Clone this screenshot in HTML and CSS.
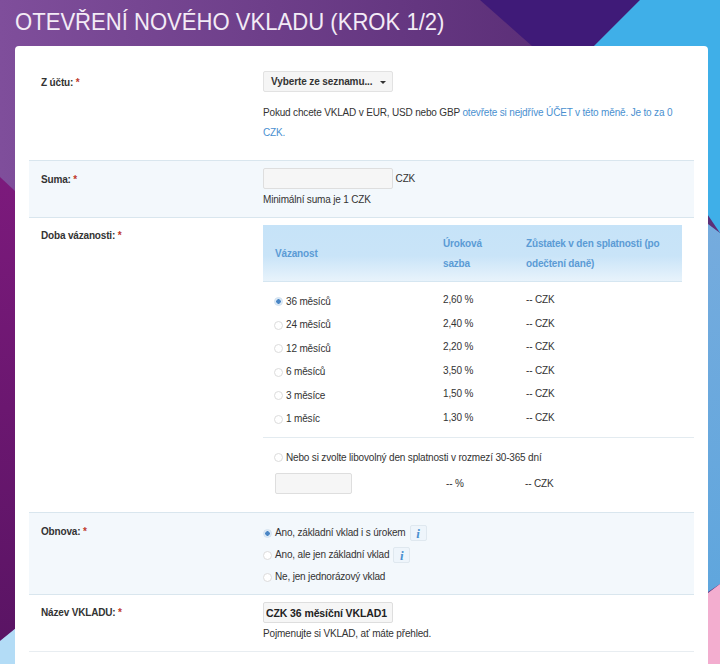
FILE: index.html
```html
<!DOCTYPE html>
<html lang="cs">
<head>
<meta charset="UTF-8">
<meta name="viewport" content="width=device-width, initial-scale=1.0">
<title>Otevření nového vkladu</title>
<link rel="stylesheet" href="styles.css">
</head>
<body>

<svg class="backdrop" viewBox="0 0 720 664" preserveAspectRatio="none" aria-hidden="true">
  <defs>
    <linearGradient id="grad-purple" x1="0" y1="0" x2="1" y2="0">
      <stop offset="0" stop-color="#7f4e9b"/>
      <stop offset="0.75" stop-color="#5c2f78"/>
    </linearGradient>
    <linearGradient id="grad-magenta" x1="0" y1="0" x2="0" y2="1">
      <stop offset="0" stop-color="#7c1a7c"/>
      <stop offset="1" stop-color="#5a1464"/>
    </linearGradient>
    <linearGradient id="grad-blue" x1="0" y1="0" x2="0" y2="1">
      <stop offset="0" stop-color="#80aede"/>
      <stop offset="1" stop-color="#5ba5dd"/>
    </linearGradient>
  </defs>
  <rect width="720" height="664" fill="url(#grad-purple)"/>
  <polygon points="480,0 640,0 594,46 532,46" fill="#3f1a78"/>
  <polygon points="640,0 720,0 720,233 594,46" fill="#3fafe8"/>
  <polygon points="600,46 708,224 720,233 720,584 600,664" fill="url(#grad-blue)"/>
  <polygon points="720,584 720,664 600,664 708,593" fill="#f3adcf"/>
  <polygon points="0,177 15,191 100,300 100,560 0,641" fill="url(#grad-magenta)"/>
  <polygon points="0,641 100,560 100,664 0,664" fill="#b3dcf6"/>
</svg>

<h1 class="title">OTEVŘENÍ NOVÉHO VKLADU (KROK 1/2)</h1>

<div class="card">
  <div class="row row-account">
    <div class="label">Z účtu: <span class="req">*</span></div>
    <div class="field">
      <button class="select">Vyberte ze seznamu... <span class="caret"></span></button>
      <p class="account-note">Pokud chcete VKLAD v EUR, USD nebo GBP <a href="#">otevřete si nejdříve ÚČET v této měně. Je to za 0 CZK.</a></p>
    </div>
  </div>

  <div class="row row-alt row-sum">
    <div class="label">Suma: <span class="req">*</span></div>
    <div class="field">
      <input class="input" type="text"> <span class="unit">CZK</span>
      <p class="hint">Minimální suma je 1 CZK</p>
    </div>
  </div>

  <div class="row row-term">
    <div class="label">Doba vázanosti: <span class="req">*</span></div>
    <div class="field">
      <table class="terms">
        <thead>
          <tr>
            <th class="col-term">Vázanost</th>
            <th class="col-rate">Úroková sazba</th>
            <th class="col-balance">Zůstatek v den splatnosti (po odečtení daně)</th>
          </tr>
        </thead>
        <tbody>
          <tr><td><label class="choice"><input type="radio" name="term" checked>36 měsíců</label></td><td>2,60 %</td><td>-- CZK</td></tr>
          <tr><td><label class="choice"><input type="radio" name="term">24 měsíců</label></td><td>2,40 %</td><td>-- CZK</td></tr>
          <tr><td><label class="choice"><input type="radio" name="term">12 měsíců</label></td><td>2,20 %</td><td>-- CZK</td></tr>
          <tr><td><label class="choice"><input type="radio" name="term">6 měsíců</label></td><td>3,50 %</td><td>-- CZK</td></tr>
          <tr><td><label class="choice"><input type="radio" name="term">3 měsíce</label></td><td>1,50 %</td><td>-- CZK</td></tr>
          <tr><td><label class="choice"><input type="radio" name="term">1 měsíc</label></td><td>1,30 %</td><td>-- CZK</td></tr>
        </tbody>
      </table>
      <div class="custom">
        <label class="choice"><input type="radio" name="term">Nebo si zvolte libovolný den splatnosti v rozmezí 30-365 dní</label>
        <div class="custom-values">
          <input class="input input-small" type="text">
          <span class="custom-rate">-- %</span>
          <span>-- CZK</span>
        </div>
      </div>
    </div>
  </div>

  <div class="row row-alt row-renew">
    <div class="label">Obnova: <span class="req">*</span></div>
    <div class="field">
      <div class="renew-line"><label class="choice"><input type="radio" name="renew" checked>Ano, základní vklad i s úrokem</label><button class="info">i</button></div>
      <div class="renew-line"><label class="choice"><input type="radio" name="renew">Ano, ale jen základní vklad</label><button class="info">i</button></div>
      <div class="renew-line"><label class="choice"><input type="radio" name="renew">Ne, jen jednorázový vklad</label></div>
    </div>
  </div>

  <div class="row row-name">
    <div class="label">Název VKLADU: <span class="req">*</span></div>
    <div class="field">
      <input class="input input-name" type="text" value="CZK 36 měsíční VKLAD1">
      <p class="hint">Pojmenujte si VKLAD, ať máte přehled.</p>
    </div>
  </div>
</div>

</body>
</html>
```

FILE: styles.css
```css
/* General Styles */
html, body {
  height: 100%;
}

body {
  position: relative;
  display: flex;
  flex-direction: column;
  height: 664px;
  margin: 0;
  overflow: hidden;
  font-family: "Liberation Sans", Arial, sans-serif;
  font-size: 10px;
  letter-spacing: -0.17px;
  line-height: 20px;
  color: #333;
}

.backdrop {
  position: absolute;
  top: 0;
  left: 0;
  width: 100%;
  height: 100%;
}

.title {
  position: relative;
  height: 46px;
  margin: 0;
  padding-left: 15px;
  font-size: 24px;
  font-weight: normal;
  letter-spacing: 0;
  line-height: 43px;
  white-space: nowrap;
  color: #f3ebf6;
  transform: scaleX(0.92);
  transform-origin: 15px 0;
}

.card {
  position: relative;
  flex: 1;
  width: 665px;
  margin-left: 15px;
  padding: 0 14px;
  background-color: #fff;
  border-radius: 4px 4px 0 0;
}

/* Form rows */
.row {
  display: flex;
  border-bottom: 1px solid #d9e6ee;
}

.row-alt {
  background-color: #f3f8fc;
}

.row-account {
  height: 115px;
  padding-top: 25px;
  box-sizing: border-box;
}

.row-sum {
  height: 58px;
  box-sizing: border-box;
  padding-top: 7px;
  border-top: 1px solid #d9e6ee;
  margin-top: -1px;
}

.row-term {
  height: 295px;
  box-sizing: border-box;
  padding-top: 7px;
}

.row-renew {
  height: 82px;
  box-sizing: border-box;
  padding-top: 9px;
}

.row-name {
  height: 57px;
  box-sizing: border-box;
  padding-top: 7px;
  border-bottom-color: #e8edf1;
}

.label {
  width: 234px;
  box-sizing: border-box;
  padding-left: 12px;
  font-weight: bold;
}

.row-account .label,
.row-sum .label {
  padding-top: 2px;
}

.row-term .label,
.row-name .label {
  padding-top: 1px;
}

.req {
  color: #c0392b;
}

.field {
  flex: 1;
}

p {
  margin: 0;
}

a {
  color: #4a90d0;
  text-decoration: none;
}

.select {
  display: block;
  width: 130px;
  height: 21px;
  padding: 0 0 0 7px;
  text-align: left;
  white-space: nowrap;
  font: bold 10px "Liberation Sans", Arial, sans-serif;
  letter-spacing: -0.1px;
  color: #333;
  background-color: #f5f5f5;
  border: 1px solid #e2e2e2;
  border-radius: 2px;
}

.caret {
  display: inline-block;
  margin-left: 5px;
  vertical-align: middle;
  border-left: 3px solid transparent;
  border-right: 3px solid transparent;
  border-top: 3px solid #333;
}

.account-note {
  margin-top: 11px;
  width: 420px;
}

.input {
  width: 130px;
  height: 21px;
  box-sizing: border-box;
  padding: 0 2px;
  margin: 0;
  vertical-align: middle;
  background-color: #f6f6f6;
  border: 1px solid #dedede;
  border-radius: 2px;
}

.input-small {
  width: 77px;
}

.input-name {
  display: block;
  font: bold 10.5px "Liberation Sans", Arial, sans-serif;
  letter-spacing: -0.1px;
  color: #222;
}

.unit {
  position: relative;
  top: 1px;
}

.hint {
  margin-top: 1px;
}

/* Table of terms */
.terms {
  width: 419px;
  border-collapse: collapse;
  table-layout: fixed;
}

.terms th {
  height: 56px;
  padding: 3px 12px 0;
  box-sizing: border-box;
  text-align: left;
  font-weight: bold;
  color: #5b9bd5;
  background: linear-gradient(#c6e3f8 0%, #c9e4f8 55%, #e8f3fb 100%);
  border-bottom: 1px solid #d5e6f1;
}

.col-term {
  width: 168px;
}

.col-rate {
  width: 83px;
}

.terms td {
  height: 23.5px;
  padding: 0 12px;
  line-height: 18px;
}

.terms td:first-child {
  padding-left: 11px;
}

.terms tbody tr:first-child td {
  padding-top: 7px;
}

.terms tbody tr:last-child td {
  padding-bottom: 7px;
}

.choice {
  display: inline-flex;
  align-items: center;
}

.terms .choice {
  position: relative;
  top: 2px;
}

.choice input {
  appearance: none;
  width: 9px;
  height: 9px;
  margin: 0 3px 0 0;
  background-color: #fff;
  border: 1px solid #dcdcdc;
  border-radius: 50%;
}

.choice input:checked {
  background: radial-gradient(circle, #4a86c5 0 2px, #dbe9f6 2.5px);
  border-color: #d5e3f0;
}

.custom {
  border-top: 1px solid #e3ebf0;
  padding: 10px 12px 0 11px;
}

.custom-values {
  display: flex;
  align-items: center;
  margin-top: 3px;
  padding-left: 1px;
}

.custom-values span {
  padding-top: 2px;
}

.custom-rate {
  margin-left: 94px;
  width: 79px;
}

/* Renewal choices */
.renew-line {
  display: flex;
  align-items: center;
  height: 22px;
}

.info {
  width: 17px;
  height: 16px;
  padding: 0;
  margin-left: 4px;
  font: italic bold 13px "Liberation Serif", serif;
  color: #4a90d0;
  background-color: #eef5fb;
  border: 1px solid #dfe8ef;
  border-radius: 2px;
}
```
